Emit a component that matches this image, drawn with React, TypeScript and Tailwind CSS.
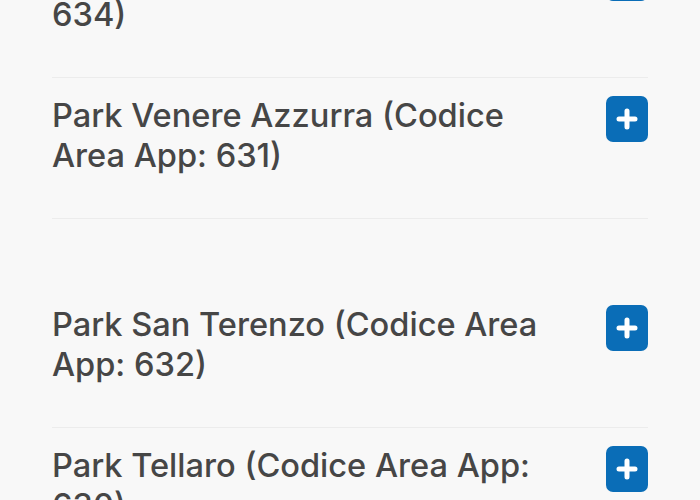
import React from "react";

function PlusButton() {
  return (
    <button className="mt-px flex h-[46px] w-[42px] shrink-0 items-center justify-center rounded-[7px] bg-[#0a6db7]">
      <svg width="22" height="22" viewBox="0 0 22 22">
        <path d="M11 3v16M3 11h16" stroke="#fff" strokeWidth="5" strokeLinecap="round" />
      </svg>
    </button>
  );
}

function Row({ lines, extraTop = false, first = false }: { lines: string; extraTop?: boolean; first?: boolean }) {
  return (
    <div
      className={`flex items-start justify-between border-b border-[#ececec] pb-[43px] ${first ? "-mt-[63px]" : ""} ${extraTop ? "pt-[85px]" : "pt-[17px]"}`}
    >
      <div className="w-[505px] text-[32.6px] leading-[40px] font-medium text-[#464646]">{lines}</div>
      <PlusButton />
    </div>
  );
}

export default function App() {
  return (
    <div
      className="h-[500px] w-[700px] overflow-hidden bg-[#f8f8f8] px-[52px]"
      style={{ fontFamily: "Inter, 'Noto Sans', sans-serif" }}
    >
      <Row first lines="Park Lerici (Codice Area App: 634)" />
      <Row lines="Park Venere Azzurra (Codice Area App: 631)" />
      <Row extraTop lines="Park San Terenzo (Codice Area App: 632)" />
      <Row lines="Park Tellaro (Codice Area App: 630)" />
    </div>
  );
}
